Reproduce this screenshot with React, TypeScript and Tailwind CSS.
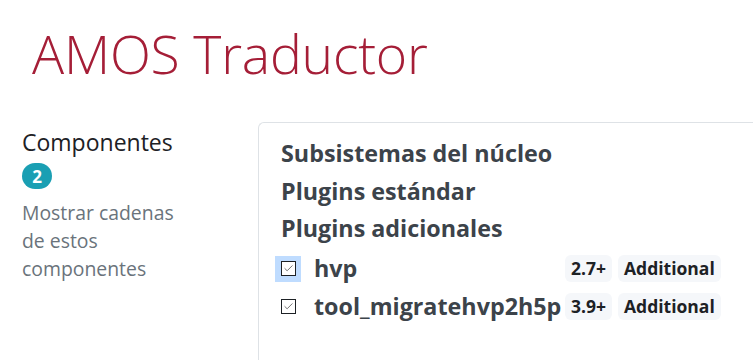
import { Check } from 'lucide-react';

interface Comp {
  name: string;
  version: string;
  focused?: boolean;
}

const components: Comp[] = [
  { name: 'hvp', version: '2.7+', focused: true },
  { name: 'tool_migratehvp2h5p', version: '3.9+' },
];

const groups = ['Subsistemas del núcleo', 'Plugins estándar', 'Plugins adicionales'];

function Badge({ children }: { children: React.ReactNode }) {
  return (
    <span className="inline-flex items-center h-[27px] px-[6px] rounded-md bg-[#f5f7fa] text-[17.5px] font-bold text-[#1d2125] leading-none">
      {children}
    </span>
  );
}

export default function App() {
  return (
    <div className="w-[753px] h-[360px] overflow-hidden bg-white font-['Open_Sans',sans-serif]">
      <h1 className="pl-[32px] pt-[22px] text-[53.5px] font-light leading-[64px] text-[#a51e37] tracking-[-0.2px]">
        AMOS Traductor
      </h1>

      <div className="flex mt-[36px] pl-[22px]">
        {/* Sidebar */}
        <div className="w-[236px] shrink-0 pt-[4px]">
          <h2 className="text-[23px] leading-[32px] text-[#1d2125]">Componentes</h2>
          <span className="mt-[5px] inline-flex items-center justify-center w-[30px] h-[26px] rounded-full bg-[#1a9fb3] text-white text-[17px] font-bold leading-none">
            2
          </span>
          <p className="mt-[10px] w-[160px] text-[19.4px] leading-[28px] text-[#6a737b]">
            Mostrar cadenas de estos componentes
          </p>
        </div>

        {/* Panel */}
        <div className="flex-1 border border-[#dee2e6] border-r-0 rounded-l-md pl-[22px] pt-[12px] min-h-[260px]">
          {groups.map((g) => (
            <div key={g} className="text-[23.3px] font-bold leading-[37.5px] text-[#3c434a]">
              {g}
            </div>
          ))}
          <div className="mt-[5px] flex flex-col gap-[6px]">
            {components.map((c) => (
              <div key={c.name} className="flex items-center h-[32px]">
                <span
                  className={`flex items-center justify-center w-[26px] h-[26px] -ml-[6px] mr-[13px] ${
                    c.focused ? 'bg-[#bfdcff]' : ''
                  }`}
                >
                  <span className="flex items-center justify-center w-[15px] h-[15px] border border-[#1d2125] bg-white">
                    <Check size={11} strokeWidth={1.5} className="text-[#333]" />
                  </span>
                </span>
                <span className="text-[23.3px] font-bold text-[#3c434a] w-[251px] leading-none">{c.name}</span>
                <div className="flex gap-[6px]">
                  <Badge>{c.version}</Badge>
                  <Badge>Additional</Badge>
                </div>
              </div>
            ))}
          </div>
        </div>
      </div>
    </div>
  );
}
